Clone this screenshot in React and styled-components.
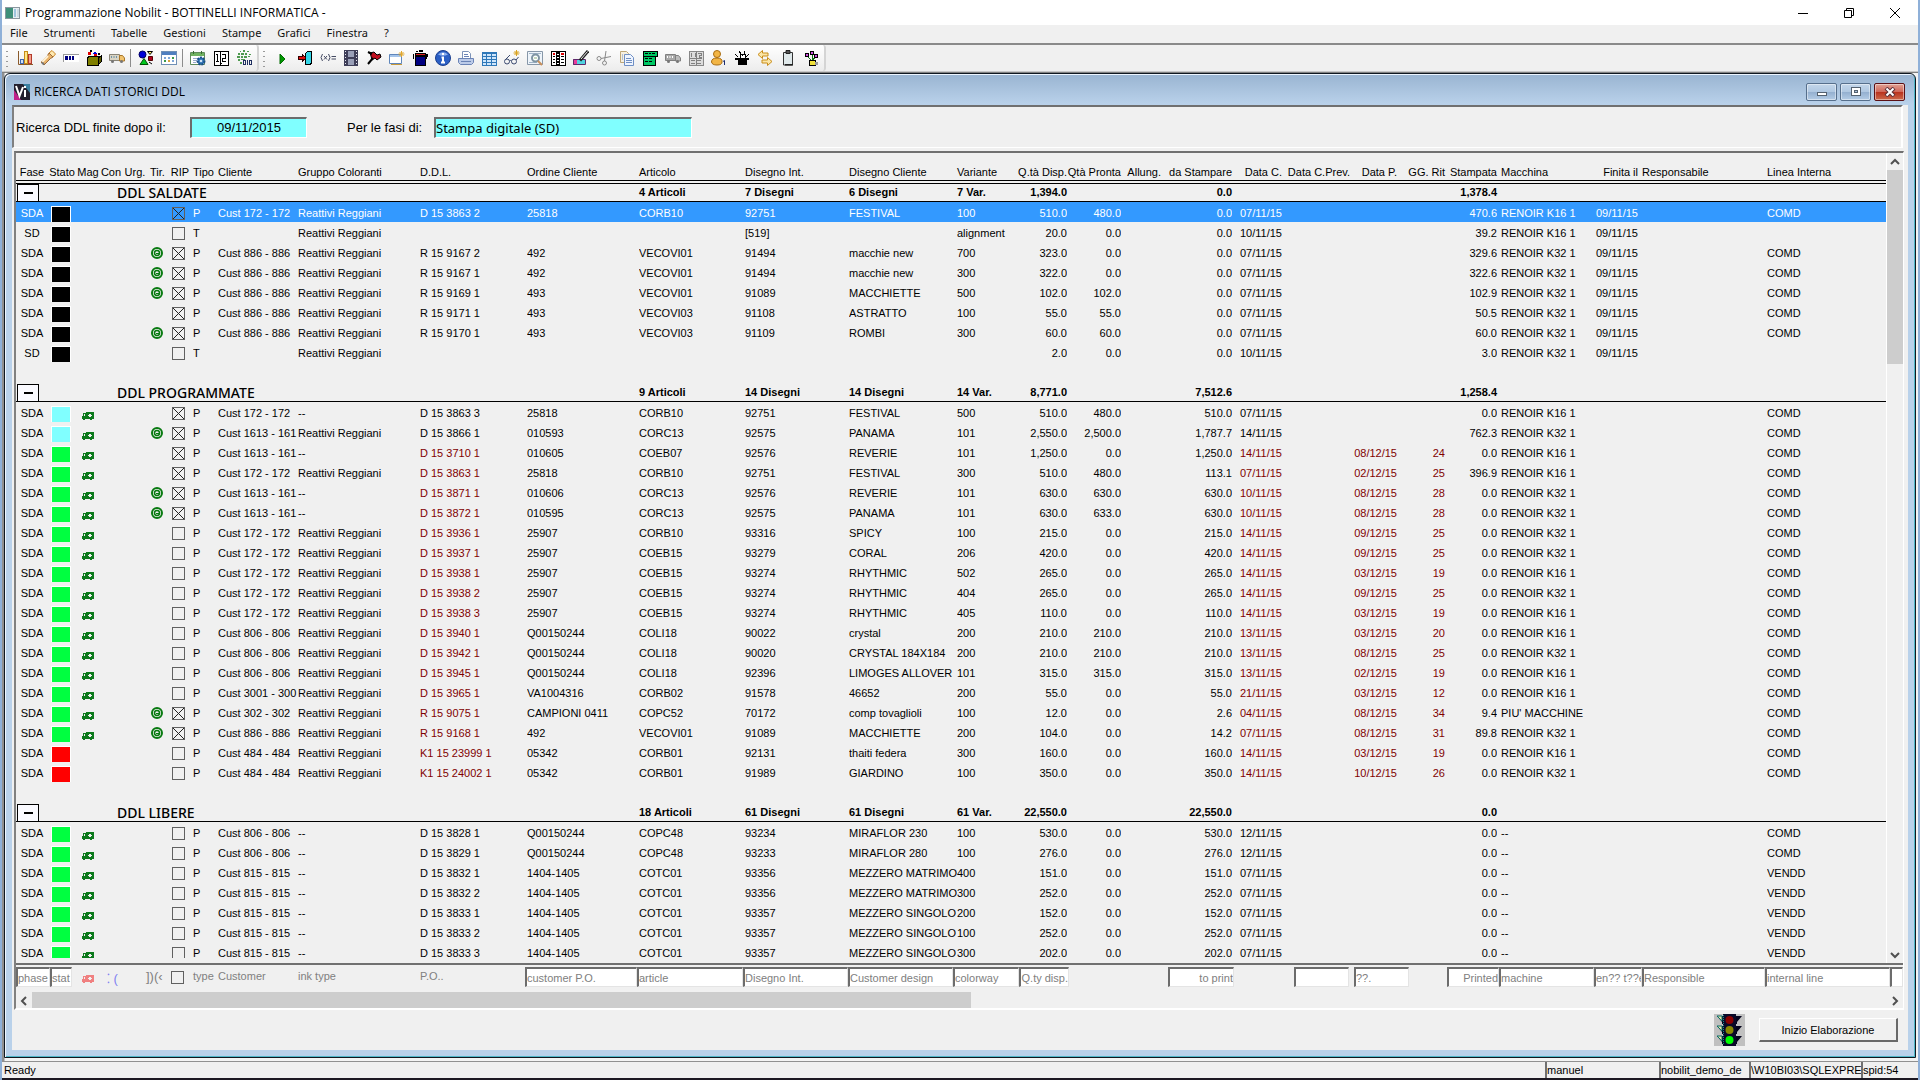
import React from 'react';
import styled, { createGlobalStyle, css } from 'styled-components';

const GlobalStyle = createGlobalStyle`
  * {
    box-sizing: border-box;
  }
  body {
    margin: 0;
    background: #f0f0f0;
    font-family: "Liberation Sans", Arial, sans-serif;
    font-size: 11px;
    color: #000;
  }
  button, input {
    font: inherit;
    color: inherit;
    border-radius: 0;
    margin: 0;
  }
`;

/* ---------- toolbar drawings, all on a 16x16 grid ---------- */

const Icon = ({ children, crisp }) => (
  <svg width="16" height="16" viewBox="0 0 16 16" fill="none" shapeRendering={crisp ? 'crispEdges' : 'auto'} aria-hidden="true">
    {children}
  </svg>
);

const ChartIcon = () => (
  <Icon>
    <path d="M1.5 1v13.5H16" stroke="#8a5a2b" />
    <rect x="3.5" y="9.5" width="3" height="4" fill="#cfe0f7" stroke="#3f66ad" />
    <rect x="7.5" y="1.500" width="3" height="12" fill="#ffe58a" stroke="#c58b16" />
    <rect x="11.500" y="4.500" width="3" height="9" fill="#f3a08c" stroke="#b23a2b" />
  </Icon>
);
const TorchIcon = () => (
  <Icon>
    <path d="M9 3l3-2.500 3.500 3.500-2.500 3z" fill="#ffe9b0" stroke="#c8862a" />
    <path d="M9 3l4 4-2.500 1.500L4 15l-3-3 6.500-6.500z" fill="#e9b36a" stroke="#9b6a3a" />
    <path d="M2 12l6-6" stroke="#fff2d6" strokeWidth="2" />
    <path d="M2 12.500l2 2" stroke="#777" strokeWidth="2" />
  </Icon>
);
const ProgressIcon = () => (
  <Icon crisp>
    <rect x="0" y="5" width="16" height="7" fill="#fff" />
    <path d="M0 4.500h16M.5 5v7" stroke="#9a9a9a" />
    <path d="M2 6h3v4H2zM6 6h2v4H6zM9 6h2v4H9z" fill="#000080" />
  </Icon>
);
const BoxIcon = () => (
  <Icon crisp>
    <path d="M1 8l3-2h11l-3 2v7H1z" fill="#808000" stroke="#000" />
    <path d="M12 8l3-2v6l-3 3z" fill="#5b5b00" stroke="#000" />
    <path d="M3 7h8l3-1H5z" fill="#000" />
    <path d="M2 2h3v3H2zM8 4h3v2H8z" fill="#e00000" />
    <path d="M9 1l2 3H7z" fill="#0000e0" />
    <path d="M4 0h2v2H4zM12 3h2v2h-2z" fill="#000" />
  </Icon>
);
const VanIcon = ({ grey }) => (
  <Icon>
    <path d="M.5 4.500h10v6H.5z" fill={grey ? '#a8a8a8' : '#d9d4c4'} stroke={grey ? '#808080' : '#8a8577'} />
    <path d="M10.500 5.500h3l2 2.500v3h-5z" fill={grey ? '#bcbcbc' : '#f1c36d'} stroke={grey ? '#808080' : '#a9772a'} />
    <path d="M2 7h1M4.500 7h1M7 7h1" stroke={grey ? '#fff' : '#6f93a8'} strokeWidth="2" />
    <circle cx="3.500" cy="11.500" r="1.500" fill="#777" />
    <circle cx="12.500" cy="11.500" r="1.500" fill="#777" />
  </Icon>
);
const ShapesIcon = () => (
  <Icon>
    <circle cx="4.500" cy="4.500" r="3.500" fill="#0000d8" stroke="#000060" />
    <path d="M9.500 1.500h5l-2.500 3z" fill="#fff36b" stroke="#000" />
    <path d="M10.500 6.500h4v4h-4z" fill="#b00020" stroke="#500" />
    <path d="M6 8.500l4 6H2z" fill="#00c81e" stroke="#004d00" />
    <path d="M11 12l3 2" stroke="#000" />
  </Icon>
);
const CalendarGridIcon = () => (
  <Icon crisp>
    <rect x=".5" y="1.500" width="15" height="13" fill="#fff" stroke="#6f8fb5" />
    <path d="M1 2h14v3H1z" fill="#4f7fc0" />
    <path d="M3 7h2v2H3zM7 7h2v2H7zM11 10h2v2h-2z" fill="#7fa6d8" />
    <path d="M11 7h2v2h-2zM3 10h2v2H3z" fill="#3a9a4a" />
    <path d="M7 10h2v2H7z" fill="#d8a23a" />
  </Icon>
);
const CalendarGearIcon = () => (
  <Icon>
    <path d="M.5 2.500h14v12H.5z" fill="#fff" stroke="#5f8a5a" />
    <path d="M1 3h13v3H1z" fill="#6fb25f" />
    <path d="M3.500 1v3M11.500 1v3" stroke="#3b6b34" />
    <path d="M3 8.500h5M3 10.500h4M3 12.500h3" stroke="#9ac" />
    <circle cx="11" cy="11" r="3.500" fill="#2f74b5" stroke="#1b4f86" strokeDasharray="2 1" strokeWidth="2" />
    <circle cx="11" cy="11" r="1.300" fill="#cfe3f6" />
  </Icon>
);
const OneTwoIcon = ({ grey }) => (
  <Icon crisp>
    {grey ? (
      <>
        <path d="M1 1h14v14H1z" fill="#dcdcdc" stroke="#888" />
        <path d="M3.500 3v4M7.500 3v4M10 3.500h3v2h-2v2h3M8 1v14M2 8.500h12M3 10.500h4M9 10.500h4M3 13h4M9 13h4" stroke="#808080" />
      </>
    ) : (
      <>
        <path d="M1 1h14v14H1z" fill="#fff" stroke="#000" />
        <path d="M7.500 1v14M4.500 4v7M3 4.500h1M3 11.500h3M9 4.500h3v3.500H9.500v3.500H13M8 13h1" stroke="#000" />
      </>
    )}
  </Icon>
);
const BinaryIcon = () => (
  <Icon crisp>
    <path d="M4 1h1v1H4zM7 0h2v2H7zM11 1h2v1h-2zM2 3h2v2H2zM5 3h3v2H5zM9 3h2v2H9zM13 4h2v1h-2zM1 6h3v2H1zM5 6h2v2H5zM8 6h3v2H8zM12 6h2v1h-2zM2 9h2v2H2zM5 9h4v1H5zM4 12h2v2H4z" fill="#4f9a50" />
    <path d="M7.500 10.500h2v4h-2zM11.500 10v5M13.500 10.500h2v4h-2z" stroke="#1d2d5f" />
  </Icon>
);
const PlayIcon = () => (
  <Icon>
    <path d="M6 4l5 5-5 5z" fill="#009900" stroke="#006a00" />
  </Icon>
);
const ExitIcon = () => (
  <Icon crisp>
    <path d="M8.500 3.500l2-2h4v12l-2 1h-4z" fill="#35d6e8" stroke="#000" />
    <path d="M1 6.500h4v-2l4 3.500-4 3.500v-2H1z" fill="#e01010" stroke="#300" />
  </Icon>
);
const VarIcon = () => (
  <Icon>
    <path d="M2.500 4Q-.5 7.500 2.500 11M4 6l3 3.500M7 6L4 9.500M8.500 4q3 3.500 0 7M11.500 6.500H16M11.500 9H16" stroke="#454b63" />
  </Icon>
);
const FilmIcon = () => (
  <Icon crisp>
    <path d="M1 0h14v16H1z" fill="#3e3e58" />
    <path d="M5 1h6v6H5zM5 9h6v6H5z" fill="#9aa0b8" />
    <path d="M2.500 1v15M13.500 1v15" stroke="#e8e8f0" strokeDasharray="1 2" />
  </Icon>
);
const PinIcon = () => (
  <Icon>
    <path d="M4 3l4-1 3 3 3-1 1 3-4 3-2-2-3 2-1-4z" fill="#c01020" stroke="#000" />
    <path d="M7 8l-5 6" stroke="#000" strokeWidth="2" />
    <path d="M2 2l4 2" stroke="#000" strokeWidth="2" />
  </Icon>
);
const NewWindowIcon = () => (
  <Icon>
    <path d="M.5 4.500h12v9H.5z" fill="#fff" stroke="#5f86bb" />
    <path d="M1 5h11v2H1z" fill="#a5c4ea" />
    <path d="M12.500 1v6M9.500 4h6M10.500 2l4 4M14.500 2l-4 4" stroke="#e2a82e" />
    <path d="M2 14.500h11" stroke="#c89a3a" />
  </Icon>
);
const PotIcon = () => (
  <Icon crisp>
    <path d="M3 6h10v9H3z" fill="#000080" stroke="#000" />
    <path d="M3 3h10v2H3z" fill="#e02020" stroke="#000" />
    <path d="M4 1h2v1H4zM7 0h4v2H7zM1 4h1v5H1zM14 4h2v3h-1v2h-1z" fill="#000" />
  </Icon>
);
const InfoIcon = () => (
  <Icon>
    <circle cx="8" cy="8" r="7.500" fill="#2b5fc4" stroke="#1b3f8f" />
    <path d="M3 4.500Q8 0 13 4.500 8 7 3 4.500z" fill="#8fb2ee" />
    <path d="M8 3v2M6.500 7.500H8V12M6 12.500h4" stroke="#fff" strokeWidth="2" />
  </Icon>
);
const PrinterIcon = () => (
  <Icon>
    <path d="M4.500 1.500h6l2 2v5h-8z" fill="#fff" stroke="#7d93b8" />
    <path d="M.5 8.500h15v4l-2 2h-11l-2-2z" fill="#bccbe8" stroke="#6a83b5" />
    <path d="M6 4.500h4M6 6.500h5M3 11.500h10" stroke="#6a83b5" />
  </Icon>
);
const TableIcon = () => (
  <Icon crisp>
    <path d="M1 2h14v13H1z" fill="#cfe6fb" stroke="#2f78b8" />
    <path d="M1 2h14v2H1z" fill="#2f78b8" />
    <path d="M1 6.500h14M1 9.500h14M1 12.500h14M5.500 2v13M10.500 2v13" stroke="#2f78b8" />
  </Icon>
);
const GlassesIcon = () => (
  <Icon>
    <circle cx="3" cy="11.500" r="2.500" stroke="#3b4a70" />
    <circle cx="10" cy="11.500" r="2.500" stroke="#3b4a70" />
    <path d="M5.500 11q1-1 2 0M1.500 9.500L6 5M12 10l2.500-3" stroke="#3b4a70" />
    <path d="M12.500 0v6M9.500 3h6M10.500 1l4 4M14.500 1l-4 4" stroke="#d9a320" />
  </Icon>
);
const SearchTableIcon = () => (
  <Icon>
    <path d="M.5 1.500h15v13H.5z" fill="#eef4fa" stroke="#8797a8" />
    <path d="M2 3.500h12M2 12.500h8" stroke="#9fb3c7" />
    <circle cx="8.500" cy="8" r="3.500" fill="#fff" stroke="#7f95a3" strokeWidth="2" />
    <path d="M7 8h3" stroke="#88b07c" />
    <path d="M11 11l4 4" stroke="#c98f5a" strokeWidth="2" />
  </Icon>
);
const AlphaTableIcon = () => (
  <Icon crisp>
    <path d="M1 1h14v14H1z" fill="#fff" stroke="#000" />
    <path d="M6 1h4v14H6z" fill="#000" />
    <path d="M3 3.500h2M11 3.500h3" stroke="#e00000" strokeWidth="2" />
    <path d="M3 6.500h2M3 9.500h2M3 12.500h2M11 6.500h3M11 9.500h3M11 12.500h3" stroke="#000" />
    <path d="M7 4h2M7 7h2M7 10h2M7 13h2" stroke="#fff" />
  </Icon>
);
const PenIcon = () => (
  <Icon>
    <path d="M0 9h7l-2 6H0z" fill="#e83a9a" />
    <path d="M4 9h8v6H4z" fill="#4fd2e0" />
    <path d="M.5 9.500h12v5H.5z" stroke="#5a2a6a" />
    <path d="M15 1L7 10.500" stroke="#222" strokeWidth="3" />
    <path d="M14.500 1.500L8 9" stroke="#e8e8e8" />
  </Icon>
);
const ScissorsIcon = () => (
  <Icon>
    <circle cx="3" cy="8.500" r="2" stroke="#8a8a8a" />
    <circle cx="8.500" cy="13" r="2" stroke="#8a8a8a" />
    <path d="M5 8.500l10-2M8.500 11L10 1" stroke="#8a8a8a" />
  </Icon>
);
const CopyIcon = () => (
  <Icon>
    <path d="M1.500 1.500h6l2 2v9h-8z" fill="#f6efe0" stroke="#bda678" />
    <path d="M5.500 4.500h6l3 3v8h-9z" fill="#eef4ff" stroke="#6f8fc4" />
    <path d="M7 8.500h5M7 10.500h6M7 12.500h6M3 5h1M3 7h1M3 9h1" stroke="#6f8fc4" />
  </Icon>
);
const GreenTerminalIcon = () => (
  <Icon crisp>
    <path d="M1 1h14v5h-2v9H1z" fill="#00c864" stroke="#000" />
    <path d="M3 3.500h3M7 3.500h2M10 3.500h3M3 8.500h3M7 8.500h3M3 11.500h3M7 11.500h3M1 6h13" stroke="#000" />
  </Icon>
);
const UserIcon = () => (
  <Icon>
    <circle cx="6" cy="4" r="3.500" fill="#f2b545" stroke="#a86c12" />
    <path d="M.5 12q0-4 5.500-4t5 4q0 3-5 3t-5.500-3z" fill="#f2b545" stroke="#a86c12" />
    <path d="M12 11.500l1.500-1V15" stroke="#1d2d6f" />
  </Icon>
);
const HatIcon = () => (
  <Icon crisp>
    <path d="M4 9h9v6H4zM1 8h14v2H1z" fill="#000" />
    <path d="M6 4h5v4H6z" fill="#fff" stroke="#000" />
    <path d="M5 1l2 3M11 1L10 4M1 4l3 3M15 4l-3 3M8 5h1" stroke="#000" />
  </Icon>
);
const SwapIcon = () => (
  <Icon>
    <path d="M1 4.500L5.500.5v2.500H11v3H5.500v2.500z" fill="#fbe6a8" stroke="#c98d1a" />
    <path d="M15 11.500L10.500 7.500V10H5v3h5.500v2.500z" fill="#fbe6a8" stroke="#c98d1a" />
  </Icon>
);
const ClipboardIcon = () => (
  <Icon>
    <path d="M3.500 2.500h9v12.500h-9z" fill="#dfe8ea" stroke="#333" />
    <path d="M6 .5h4v3H6z" fill="#555" stroke="#222" />
    <path d="M5 14h8v1.500H5z" fill="#222" />
  </Icon>
);
const FlowersIcon = () => (
  <Icon crisp>
    <path d="M6 10h6v5H6z" fill="#f2e23a" stroke="#000" />
    <path d="M12 12h3v3h-3z" fill="#9a9a9a" />
    <path d="M4 6l4 4M9 4v6M13 6l-3 4" stroke="#107010" />
    <path d="M2 3h3v3H2zM7 1h3v3H7zM11 4h3v3h-3z" fill="#d050e0" stroke="#000" />
  </Icon>
);

const TruckMark = ({ color = '#0c7a1c' }) => (
  <svg width="12" height="8" viewBox="0 0 12 8" shapeRendering="crispEdges" aria-hidden="true">
    <rect x="4" y="0" width="8" height="7" fill={color} />
    <rect x="1" y="1" width="3" height="1" fill={color} />
    <rect x="1" y="2" width="1" height="2" fill={color} />
    <rect x="3" y="2" width="1" height="2" fill={color} />
    <rect x="0" y="4" width="4" height="3" fill={color} />
    <rect x="1" y="7" width="2" height="1" fill={color} />
    <rect x="8" y="7" width="2" height="1" fill={color} />
    <rect x="6" y="3" width="4" height="1" fill="#f0f0f0" />
    <rect x="7" y="2" width="2" height="3" fill="#f0f0f0" />
  </svg>
);

const TirMark = () => (
  <svg width="12" height="12" viewBox="0 0 12 12" fill="none" aria-hidden="true">
    <circle cx="6" cy="6" r="5" stroke="#087a10" strokeWidth="2" />
    <circle cx="6" cy="6" r="2.500" stroke="#087a10" strokeWidth="1.500" />
    <path d="M5 6.500h3" stroke="#087a10" />
  </svg>
);

const AppIcon = () => (
  <svg width="15" height="12" viewBox="0 0 15 12" aria-hidden="true">
    <rect x=".5" y=".5" width="14" height="11" fill="#e8eef2" stroke="#8a979f" />
    <rect x="1" y="1" width="7" height="10" fill="#3f8f7a" />
    <rect x="9" y="2" width="2" height="8" fill="#9fc4dd" />
    <rect x="12" y="2" width="2" height="8" fill="#c9dbe6" />
  </svg>
);

const LogoIcon = () => (
  <svg width="16" height="16" viewBox="0 0 16 16" fill="none" aria-hidden="true">
    <rect width="16" height="16" fill="#23202e" />
    <path d="M0 6l7 10H0z" fill="#c0208a" />
    <path d="M9 0h7v9z" fill="#3a7fa0" />
    <path d="M2 2l3.500 10L9 3" stroke="#fff" strokeWidth="2" />
    <path d="M11 6v7M11 2v2" stroke="#fff" strokeWidth="2" />
  </svg>
);

const TrafficLight = () => (
  <svg width="31" height="32" viewBox="0 0 31 32" aria-hidden="true">
    <rect width="31" height="32" fill="#c0c0c0" />
    {[2, 12, 22].map((y) => (
      <path key={y} d={`M3 ${y}h25l-5 6v2H8v-2z`} fill="#05051e" />
    ))}
    {[2, 12, 22].map((y) => (
      <path key={y} d={`M3 ${y}h5v5z`} fill="#e8e8a0" stroke="#0a6a6a" />
    ))}
    <rect x="9" y="0" width="13" height="32" fill="#0a0a28" />
    <path d="M9.500 1v30" stroke="#1a8a8a" strokeDasharray="1 1" />
    <circle cx="15.500" cy="6" r="4" fill="#8a0000" />
    <circle cx="15.500" cy="16" r="4" fill="#8a8a00" />
    <circle cx="15.500" cy="26" r="4" fill="#00ff00" />
  </svg>
);

const Chevron = ({ d }) => (
  <svg width="10" height="10" viewBox="0 0 10 10" fill="none" aria-hidden="true">
    <path d={d} stroke="#505050" strokeWidth="2" />
  </svg>
);

/* ---------- outer window ---------- */

const Frame = styled.div`
  display: flex;
  flex-direction: column;
  height: 100vh;
  overflow: hidden;
  background: #f0f0f0;
  border: solid #8fb0d8;
  border-width: 0 2px;
`;

const TitleBar = styled.header`
  display: flex;
  align-items: center;
  height: 25px;
  flex: none;
  padding-left: 3px;
  background: #fff;
  font: 12px/16px "Open Sans", sans-serif;
`;

const AppTitle = styled.h1`
  flex: 1;
  margin: 0 0 0 5px;
  font: inherit;
`;

const CaptionButton = styled.button`
  display: grid;
  place-items: center;
  width: 46px;
  height: 24px;
  padding: 0;
  border: 0;
  background: none;
`;

const MenuBar = styled.nav`
  display: flex;
  gap: 16px;
  height: 18px;
  flex: none;
  padding-left: 8px;
  font: 11px/15px "Noto Sans", sans-serif;
`;

const MenuLink = styled.a`
  color: #111;
  text-decoration: none;
`;

const ToolStrip = styled.div`
  display: flex;
  flex: none;
  height: 29px;
  border-top: 2px solid #8a8a8a;
  border-bottom: 1px solid #c8c8c8;
`;

const ToolGroup = styled.div`
  display: flex;
  align-items: center;
  padding: 0 2px 0 11px;
  border-right: 2px solid #d4d4d4;
  border-radius: 0 3px 3px 0;
  background:
    radial-gradient(circle, #9a9a9a 1px, transparent 1px) 3px 4px / 4px 5px no-repeat,
    radial-gradient(circle, #9a9a9a 1px, transparent 1px) 3px 9px / 4px 5px no-repeat,
    radial-gradient(circle, #9a9a9a 1px, transparent 1px) 3px 14px / 4px 5px no-repeat,
    radial-gradient(circle, #9a9a9a 1px, transparent 1px) 3px 19px / 4px 5px no-repeat,
    linear-gradient(#fff, #ececec);
`;

const ToolButton = styled.button`
  display: grid;
  place-items: center;
  width: 23px;
  height: 24px;
  padding: 0;
  border: 0;
  background: none;
`;

const ToolDivider = styled.span`
  width: 2px;
  height: 18px;
  margin: 0 2px;
  border-left: 1px solid #8c8c8c;
`;

const Workspace = styled.main`
  display: flex;
  flex: 1;
  min-height: 0;
  padding: 0 2px 3px;
  border-top: 1px solid #808080;
  background: linear-gradient(90deg, #909090 2px, #f4f4f4 3px);
`;

/* ---------- child window ---------- */

const ChildWindow = styled.section`
  display: flex;
  flex-direction: column;
  flex: 1;
  min-width: 0;
  padding: 1px 7px 7px;
  border: 1px solid #101820;
  border-radius: 6px 6px 0 0;
  background: linear-gradient(#99b4d1, #b9d1ea 30px);
  box-shadow: inset 1px 1px 0 #eef6ff, inset -1px -1px 0 #4fb6c8;
`;

const ChildTitle = styled.div`
  display: flex;
  align-items: center;
  flex: none;
  height: 30px;
  padding: 3px 3px 0 2px;
  font: 12px/16px "Open Sans", sans-serif;
`;

const ChildName = styled.h2`
  flex: 1;
  margin: 0 0 0 4px;
  font: inherit;
`;

const GlassButton = styled.button`
  display: grid;
  place-items: center;
  width: 31px;
  height: 18px;
  margin-left: 3px;
  padding: 0;
  border: 1px solid ${(p) => (p.$close ? '#5b1015' : '#566f8c')};
  border-radius: 2px;
  box-shadow: inset 0 0 0 1px rgba(255, 255, 255, 0.45);
  background: ${(p) =>
    p.$close
      ? 'linear-gradient(#e0a294, #d0685a 48%, #b8301c 50%, #cc6a4c)'
      : 'linear-gradient(#c3d6ea, #b0c8e2 48%, #93afcf 50%, #b4cce6)'};
`;

const ChildBody = styled.div`
  display: flex;
  flex-direction: column;
  flex: 1;
  min-height: 0;
  background: #f0f0f0;
`;

const SearchForm = styled.form`
  display: flex;
  align-items: center;
  flex: none;
  height: 43px;
  margin-right: 5px;
  padding-left: 2px;
  border: solid;
  border-width: 2px 2px 1px 2px;
  border-color: #707070 #fff #fff #808080;
  font-size: 13px;
`;

const FormLabel = styled.label`
  width: ${(p) => p.$width}px;
`;

const CyanInput = styled.input`
  width: ${(p) => p.$width}px;
  height: 21px;
  margin-right: ${(p) => p.$after || 0}px;
  padding: 0;
  border: solid;
  border-width: 2px 1px 1px 2px;
  border-color: #6c6c6c #fff #fff #6c6c6c;
  background: #80ffff;
  text-align: ${(p) => p.$align || 'left'};
  font-family: ${(p) => (p.$align ? 'inherit' : '"Noto Sans", sans-serif')};
  font-size: 13px;
`;

/* ---------- grid ---------- */

const GridPanel = styled.div`
  display: flex;
  flex-direction: column;
  flex: 1;
  min-height: 0;
  margin: 3px 4px 0 2px;
  border: solid;
  border-width: 2px 1px 2px 2px;
  border-color: #707070 #fff #fff #808080;
`;

const GridBody = styled.div`
  display: flex;
  flex: 1;
  min-height: 0;
`;

const TableClip = styled.div`
  flex: 1;
  min-width: 0;
  margin-bottom: 5px;
  overflow: hidden;
`;

const Table = styled.table`
  width: 100%;
  table-layout: fixed;
  border-collapse: separate;
  border-spacing: 0;
`;

const HeadCell = styled.th`
  height: 31px;
  padding: 0 0 0 ${(p) => (p.$indent ? 4 : 0)}px;
  border-bottom: 4px double #000;
  font-weight: normal;
  line-height: 16px;
  vertical-align: bottom;
  white-space: nowrap;
  text-align: ${(p) => p.$align || 'left'};
`;

const Cell = styled.td`
  height: 20px;
  padding: 2px 0 0 ${(p) => (p.$indent ? 4 : 0)}px;
  line-height: 18px;
  white-space: nowrap;
  overflow: hidden;
  text-align: ${(p) => p.$align || 'left'};
  color: ${(p) => (p.$late ? '#800000' : 'inherit')};
`;

const MarkCell = styled.td`
  height: 20px;
  padding: 0 0 ${(p) => p.$bottom || 0}px ${(p) => p.$left}px;
  vertical-align: bottom;
  & > * {
    display: block;
  }
`;

const Row = styled.tr`
  ${(p) =>
    p.$selected &&
    css`
      background: #3399ff;
      color: #fff;
    `}
`;

const SpacerCell = styled.td`
  height: 22px;
  padding: 0;
`;

const GroupCell = styled.td`
  height: 18px;
  padding: 0;
  border-bottom: 1px solid #000;
  font-weight: bold;
  line-height: 17px;
  white-space: nowrap;
  text-align: ${(p) => p.$align || 'left'};
`;

const GroupName = styled.div`
  display: flex;
  gap: 78px;
  padding-left: 1px;
  font-weight: 500;
  font-size: 14px;
  font-family: "Noto Sans", sans-serif;
`;

const Toggle = styled.button`
  display: grid;
  place-items: center;
  width: 22px;
  height: 17px;
  padding: 0;
  border: 1px solid #000;
  border-bottom: 0;
  background: #fafaff;
  &::before {
    content: '';
    width: 9px;
    height: 2px;
    background: #000;
  }
`;

const Swatch = styled.span`
  width: 20px;
  height: 16px;
  border: 1px solid #fff;
  border-bottom: 0;
  background: ${(p) => p.$color};
`;

const Check = styled.input`
  appearance: none;
  width: 13px;
  height: 13px;
  border: 1px solid #606060;
  &:checked {
    background:
      linear-gradient(45deg, transparent 46%, #222 47%, #222 53%, transparent 54%),
      linear-gradient(-45deg, transparent 46%, #222 47%, #222 53%, transparent 54%);
  }
`;

const VScroll = styled.div`
  display: flex;
  flex-direction: column;
  width: 17px;
  border-left: 1px solid #fff;
`;

const ScrollButton = styled.button`
  display: grid;
  place-items: center;
  flex: none;
  width: 16px;
  height: 17px;
  padding: 0;
  border: 0;
  background: none;
`;

const Track = styled.div`
  display: flex;
  flex: 1;
  flex-direction: ${(p) => (p.$vertical ? 'column' : 'row')};
`;

const Thumb = styled.div`
  flex: 0 0 ${(p) => p.$size}%;
  background: #cdcdcd;
`;

const FilterRow = styled.div`
  display: flex;
  flex: none;
  height: 29px;
  padding-top: 2px;
  border-top: 2px solid #707070;
  color: #808080;
  overflow: hidden;
`;

const FilterInput = styled.input`
  flex: ${(p) => (p.$grow ? '1 1 0' : `0 0 ${p.$width}px`)};
  min-width: 0;
  width: ${(p) => p.$width || 0}px;
  height: 20px;
  padding: 0;
  border: solid;
  border-width: 2px 1px 1px 2px;
  border-color: #6c6c6c #e4e4e4 #e4e4e4 #6c6c6c;
  background: #fff;
  text-align: ${(p) => p.$align || 'left'};
`;

const FilterText = styled.span`
  flex: 0 0 ${(p) => p.$width}px;
  height: 20px;
  line-height: 18px;
  white-space: nowrap;
  color: ${(p) => p.$color || 'inherit'};
`;

const FilterMark = styled(FilterText)`
  display: flex;
  align-items: center;
  padding: ${(p) => p.$top || 0}px 0 0 ${(p) => p.$left}px;
  font-size: 13px;
`;

const HScroll = styled.div`
  display: flex;
  flex: none;
  height: 16px;
`;

const Footer = styled.div`
  display: flex;
  align-items: center;
  justify-content: flex-end;
  flex: none;
  gap: 14px;
  height: 40px;
  padding-right: 10px;
`;

const RunButton = styled.button`
  width: 139px;
  height: 24px;
  padding: 0;
  border: solid;
  border-width: 1px 2px 2px 1px;
  border-color: #fff #696969 #696969 #fff;
  background: #f0f0f0;
`;

const StatusBar = styled.footer`
  display: flex;
  flex: none;
  height: 17px;
  border-top: 1px solid #909090;
  line-height: 16px;
`;

const StatusCell = styled.div`
  flex: ${(p) => (p.$width ? `0 0 ${p.$width}px` : '1')};
  padding-left: ${(p) => (p.$width ? 0 : 2)}px;
  border-left: ${(p) => (p.$width ? 2 : 0)}px solid #707070;
  white-space: nowrap;
  overflow: hidden;
`;

const BottomEdge = styled.div`
  flex: none;
  height: 2px;
  background: #1c1822;
`;

/* ---------- data ---------- */

const MENU = ['File', 'Strumenti', 'Tabelle', 'Gestioni', 'Stampe', 'Grafici', 'Finestra', '?'];

const TOOLS_LEFT = [
  ['Statistiche', ChartIcon], ['Cerca', TorchIcon], ['Avanzamento', ProgressIcon], ['Magazzino', BoxIcon], ['Spedizioni', VanIcon],
  null,
  ['Disegni', ShapesIcon], ['Calendario', CalendarGridIcon],
  null,
  ['Pianificazione', CalendarGearIcon], ['Numerazione', OneTwoIcon], ['Dati', BinaryIcon],
];

const TOOLS_RIGHT = [
  ['Avvia', PlayIcon], ['Esci', ExitIcon], ['Variabili', VarIcon], ['Filmato', FilmIcon], ['Fissa', PinIcon],
  ['Nuova finestra', NewWindowIcon], ['Ricette', PotIcon], ['Informazioni', InfoIcon], ['Stampa', PrinterIcon],
  ['Griglia', TableIcon], ['Visualizza', GlassesIcon], ['Anteprima', SearchTableIcon], ['Elenco', AlphaTableIcon],
  ['Modifica', PenIcon], ['Taglia', ScissorsIcon], ['Copia', CopyIcon], ['Terminale', GreenTerminalIcon],
  ['Consegne', () => <VanIcon grey />], ['Sequenza', () => <OneTwoIcon grey />], ['Utente', UserIcon],
  ['Procedure', HatIcon], ['Scambia', SwapIcon], ['Incolla', ClipboardIcon], ['Colori', FlowersIcon],
];

const COLUMNS = [
  { name: 'Fase', width: 32, align: 'center' },
  { name: 'Stato', width: 28, align: 'center' },
  { name: 'Mag', width: 24, align: 'center' },
  { name: 'Con', width: 22, align: 'center' },
  { name: 'Urg.', width: 26, align: 'center' },
  { name: 'Tir.', width: 19, align: 'center' },
  { name: 'RIP', width: 26, align: 'center' },
  { name: 'Tipo', width: 25 },
  { name: 'Cliente', width: 80 },
  { name: 'Gruppo Coloranti', width: 122 },
  { name: 'D.D.L.', width: 107 },
  { name: 'Ordine Cliente', width: 112 },
  { name: 'Articolo', width: 106 },
  { name: 'Disegno Int.', width: 104 },
  { name: 'Disegno Cliente', width: 108 },
  { name: 'Variante', width: 52 },
  { name: 'Q.tà Disp.', width: 58, align: 'right' },
  { name: 'Qtà Pronta', width: 54, align: 'right' },
  { name: 'Allung.', width: 40, align: 'right' },
  { name: 'da Stampare', width: 71, align: 'right' },
  { name: 'Data C.', width: 50, align: 'right' },
  { name: 'Data C.Prev.', width: 68, align: 'right' },
  { name: 'Data P.', width: 47, align: 'right' },
  { name: 'GG. Rit', width: 48, align: 'right' },
  { name: 'Stampata', width: 52, align: 'right' },
  { name: 'Macchina', width: 97, indent: true },
  { name: 'Finita il', width: 44, align: 'right' },
  { name: 'Responsabile', width: 129, indent: true },
  { name: 'Linea Interna' },
];

const BLACK = '#000';
const CYAN = '#80ffff';
const GREEN = '#00ff40';
const RED = '#ff0000';
const RR = 'Reattivi Reggiani';
const K16 = 'RENOIR K16 1';
const K32 = 'RENOIR K32 1';

// fase, colour, marks (m = truck, t = target, x = rip), tipo, cliente, gruppo, ddl, ordine, articolo,
// disegno, disegno cliente, variante, disp, pronta, da stampare, data c, data p, gg, stampata, macchina, finita, linea
const GROUPS = [
  {
    name: 'DDL SALDATE',
    totals: ['4 Articoli', '7 Disegni', '6 Disegni', '7 Var.', '1,394.0', '0.0', '1,378.4'],
    rows: [
      ['SDA', BLACK, 'x', 'P', 'Cust 172 - 172', RR, 'D 15 3863 2', '25818', 'CORB10', '92751', 'FESTIVAL', '100', '510.0', '480.0', '0.0', '07/11/15', '', '', '470.6', K16, '09/11/15', 'COMD'],
      ['SD', BLACK, '', 'T', '', RR, '', '', '', '[519]', '', 'alignment', '20.0', '0.0', '0.0', '10/11/15', '', '', '39.2', K16, '09/11/15', ''],
      ['SDA', BLACK, 'tx', 'P', 'Cust 886 - 886', RR, 'R 15 9167 2', '492', 'VECOVI01', '91494', 'macchie new', '700', '323.0', '0.0', '0.0', '07/11/15', '', '', '329.6', K32, '09/11/15', 'COMD'],
      ['SDA', BLACK, 'tx', 'P', 'Cust 886 - 886', RR, 'R 15 9167 1', '492', 'VECOVI01', '91494', 'macchie new', '300', '322.0', '0.0', '0.0', '07/11/15', '', '', '322.6', K32, '09/11/15', 'COMD'],
      ['SDA', BLACK, 'tx', 'P', 'Cust 886 - 886', RR, 'R 15 9169 1', '493', 'VECOVI01', '91089', 'MACCHIETTE', '500', '102.0', '102.0', '0.0', '07/11/15', '', '', '102.9', K32, '09/11/15', 'COMD'],
      ['SDA', BLACK, 'x', 'P', 'Cust 886 - 886', RR, 'R 15 9171 1', '493', 'VECOVI03', '91108', 'ASTRATTO', '100', '55.0', '55.0', '0.0', '07/11/15', '', '', '50.5', K32, '09/11/15', 'COMD'],
      ['SDA', BLACK, 'tx', 'P', 'Cust 886 - 886', RR, 'R 15 9170 1', '493', 'VECOVI03', '91109', 'ROMBI', '300', '60.0', '60.0', '0.0', '07/11/15', '', '', '60.0', K32, '09/11/15', 'COMD'],
      ['SD', BLACK, '', 'T', '', RR, '', '', '', '', '', '', '2.0', '0.0', '0.0', '10/11/15', '', '', '3.0', K32, '09/11/15', ''],
    ],
  },
  {
    name: 'DDL PROGRAMMATE',
    totals: ['9 Articoli', '14 Disegni', '14 Disegni', '14 Var.', '8,771.0', '7,512.6', '1,258.4'],
    rows: [
      ['SDA', CYAN, 'mx', 'P', 'Cust 172 - 172', '--', 'D 15 3863 3', '25818', 'CORB10', '92751', 'FESTIVAL', '500', '510.0', '480.0', '510.0', '07/11/15', '', '', '0.0', K16, '', 'COMD'],
      ['SDA', CYAN, 'mtx', 'P', 'Cust 1613 - 161', RR, 'D 15 3866 1', '010593', 'CORC13', '92575', 'PANAMA', '101', '2,550.0', '2,500.0', '1,787.7', '14/11/15', '', '', '762.3', K32, '', 'COMD'],
      ['SDA', GREEN, 'mx', 'P', 'Cust 1613 - 161', '--', 'D 15 3710 1', '010605', 'COEB07', '92576', 'REVERIE', '101', '1,250.0', '0.0', '1,250.0', '14/11/15', '08/12/15', '24', '0.0', K16, '', 'COMD'],
      ['SDA', GREEN, 'mx', 'P', 'Cust 172 - 172', RR, 'D 15 3863 1', '25818', 'CORB10', '92751', 'FESTIVAL', '300', '510.0', '480.0', '113.1', '07/11/15', '02/12/15', '25', '396.9', K16, '', 'COMD'],
      ['SDA', GREEN, 'mtx', 'P', 'Cust 1613 - 161', '--', 'D 15 3871 1', '010606', 'CORC13', '92576', 'REVERIE', '101', '630.0', '630.0', '630.0', '10/11/15', '08/12/15', '28', '0.0', K32, '', 'COMD'],
      ['SDA', GREEN, 'mtx', 'P', 'Cust 1613 - 161', '--', 'D 15 3872 1', '010595', 'CORC13', '92575', 'PANAMA', '101', '630.0', '633.0', '630.0', '10/11/15', '08/12/15', '28', '0.0', K32, '', 'COMD'],
      ['SDA', GREEN, 'm', 'P', 'Cust 172 - 172', RR, 'D 15 3936 1', '25907', 'CORB10', '93316', 'SPICY', '100', '215.0', '0.0', '215.0', '14/11/15', '09/12/15', '25', '0.0', K32, '', 'COMD'],
      ['SDA', GREEN, 'm', 'P', 'Cust 172 - 172', RR, 'D 15 3937 1', '25907', 'COEB15', '93279', 'CORAL', '206', '420.0', '0.0', '420.0', '14/11/15', '09/12/15', '25', '0.0', K32, '', 'COMD'],
      ['SDA', GREEN, 'm', 'P', 'Cust 172 - 172', RR, 'D 15 3938 1', '25907', 'COEB15', '93274', 'RHYTHMIC', '502', '265.0', '0.0', '265.0', '14/11/15', '03/12/15', '19', '0.0', K16, '', 'COMD'],
      ['SDA', GREEN, 'm', 'P', 'Cust 172 - 172', RR, 'D 15 3938 2', '25907', 'COEB15', '93274', 'RHYTHMIC', '404', '265.0', '0.0', '265.0', '14/11/15', '09/12/15', '25', '0.0', K32, '', 'COMD'],
      ['SDA', GREEN, 'm', 'P', 'Cust 172 - 172', RR, 'D 15 3938 3', '25907', 'COEB15', '93274', 'RHYTHMIC', '405', '110.0', '0.0', '110.0', '14/11/15', '03/12/15', '19', '0.0', K16, '', 'COMD'],
      ['SDA', GREEN, 'm', 'P', 'Cust 806 - 806', RR, 'D 15 3940 1', 'Q00150244', 'COLI18', '90022', 'crystal', '200', '210.0', '210.0', '210.0', '13/11/15', '03/12/15', '20', '0.0', K16, '', 'COMD'],
      ['SDA', GREEN, 'm', 'P', 'Cust 806 - 806', RR, 'D 15 3942 1', 'Q00150244', 'COLI18', '90020', 'CRYSTAL 184X184', '200', '210.0', '210.0', '210.0', '13/11/15', '08/12/15', '25', '0.0', K32, '', 'COMD'],
      ['SDA', GREEN, 'm', 'P', 'Cust 806 - 806', RR, 'D 15 3945 1', 'Q00150244', 'COLI18', '92396', 'LIMOGES ALLOVER', '101', '315.0', '315.0', '315.0', '13/11/15', '02/12/15', '19', '0.0', K16, '', 'COMD'],
      ['SDA', GREEN, 'm', 'P', 'Cust 3001 - 300', RR, 'D 15 3965 1', 'VA1004316', 'CORB02', '91578', '46652', '200', '55.0', '0.0', '55.0', '21/11/15', '03/12/15', '12', '0.0', K16, '', 'COMD'],
      ['SDA', GREEN, 'mtx', 'P', 'Cust 302 - 302', RR, 'R 15 9075 1', 'CAMPIONI 0411', 'COPC52', '70172', 'comp tovaglioli', '100', '12.0', '0.0', '2.6', '04/11/15', '08/12/15', '34', '9.4', "PIU' MACCHINE", '', 'COMD'],
      ['SDA', GREEN, 'mtx', 'P', 'Cust 886 - 886', RR, 'R 15 9168 1', '492', 'VECOVI01', '91089', 'MACCHIETTE', '200', '104.0', '0.0', '14.2', '07/11/15', '08/12/15', '31', '89.8', K32, '', 'COMD'],
      ['SDA', RED, '', 'P', 'Cust 484 - 484', RR, 'K1 15 23999 1', '05342', 'CORB01', '92131', 'thaiti federa', '300', '160.0', '0.0', '160.0', '14/11/15', '03/12/15', '19', '0.0', K16, '', 'COMD'],
      ['SDA', RED, '', 'P', 'Cust 484 - 484', RR, 'K1 15 24002 1', '05342', 'CORB01', '91989', 'GIARDINO', '100', '350.0', '0.0', '350.0', '14/11/15', '10/12/15', '26', '0.0', K32, '', 'COMD'],
    ],
  },
  {
    name: 'DDL LIBERE',
    totals: ['18 Articoli', '61 Disegni', '61 Disegni', '61 Var.', '22,550.0', '22,550.0', '0.0'],
    rows: [
      ['SDA', GREEN, 'm', 'P', 'Cust 806 - 806', '--', 'D 15 3828 1', 'Q00150244', 'COPC48', '93234', 'MIRAFLOR 230', '100', '530.0', '0.0', '530.0', '12/11/15', '', '', '0.0', '--', '', 'COMD'],
      ['SDA', GREEN, 'm', 'P', 'Cust 806 - 806', '--', 'D 15 3829 1', 'Q00150244', 'COPC48', '93233', 'MIRAFLOR 280', '100', '276.0', '0.0', '276.0', '12/11/15', '', '', '0.0', '--', '', 'COMD'],
      ['SDA', GREEN, 'm', 'P', 'Cust 815 - 815', '--', 'D 15 3832 1', '1404-1405', 'COTC01', '93356', 'MEZZERO MATRIMON', '400', '151.0', '0.0', '151.0', '07/11/15', '', '', '0.0', '--', '', 'VENDD'],
      ['SDA', GREEN, 'm', 'P', 'Cust 815 - 815', '--', 'D 15 3832 2', '1404-1405', 'COTC01', '93356', 'MEZZERO MATRIMON', '300', '252.0', '0.0', '252.0', '07/11/15', '', '', '0.0', '--', '', 'VENDD'],
      ['SDA', GREEN, 'm', 'P', 'Cust 815 - 815', '--', 'D 15 3833 1', '1404-1405', 'COTC01', '93357', 'MEZZERO SINGOLO', '200', '152.0', '0.0', '152.0', '07/11/15', '', '', '0.0', '--', '', 'VENDD'],
      ['SDA', GREEN, 'm', 'P', 'Cust 815 - 815', '--', 'D 15 3833 2', '1404-1405', 'COTC01', '93357', 'MEZZERO SINGOLO', '100', '252.0', '0.0', '252.0', '07/11/15', '', '', '0.0', '--', '', 'VENDD'],
      ['SDA', GREEN, 'm', 'P', 'Cust 815 - 815', '--', 'D 15 3833 3', '1404-1405', 'COTC01', '93357', 'MEZZERO SINGOLO', '300', '202.0', '0.0', '202.0', '07/11/15', '', '', '0.0', '--', '', 'VENDD'],
    ],
  },
];

/* ---------- parts ---------- */

const Tools = ({ items }) => (
  <ToolGroup role="toolbar">
    {items.map((item, i) => {
      if (!item) return <ToolDivider key={i} />;
      const [label, Drawing] = item;
      return (
        <ToolButton key={i} type="button" aria-label={label}>
          <Drawing />
        </ToolButton>
      );
    })}
  </ToolGroup>
);

const DataRow = ({ row, selected }) => {
  const [fase, color, marks, tipo, cliente, gruppo, ddl, ordine, articolo, disegno, disCliente, variante,
    disp, pronta, stampare, dataC, dataP, gg, stampata, macchina, finita, linea] = row;
  const late = dataP !== '';
  return (
    <Row $selected={selected}>
      <Cell $align="center">{fase}</Cell>
      <MarkCell $left={3}><Swatch $color={color} /></MarkCell>
      <MarkCell $left={6} $bottom={2}>{marks.includes('m') && <TruckMark />}</MarkCell>
      <Cell />
      <Cell />
      <MarkCell $left={3} $bottom={3}>{marks.includes('t') && <TirMark />}</MarkCell>
      <MarkCell $left={5} $bottom={2}>
        <Check type="checkbox" defaultChecked={marks.includes('x')} aria-label={`RIP ${ddl}`} />
      </MarkCell>
      <Cell>{tipo}</Cell>
      <Cell>{cliente}</Cell>
      <Cell>{gruppo}</Cell>
      <Cell $late={late}>{ddl}</Cell>
      <Cell>{ordine}</Cell>
      <Cell>{articolo}</Cell>
      <Cell>{disegno}</Cell>
      <Cell>{disCliente}</Cell>
      <Cell>{variante}</Cell>
      <Cell $align="right">{disp}</Cell>
      <Cell $align="right">{pronta}</Cell>
      <Cell />
      <Cell $align="right">{stampare}</Cell>
      <Cell $align="right" $late={late}>{dataC}</Cell>
      <Cell />
      <Cell $align="right" $late={late}>{dataP}</Cell>
      <Cell $align="right" $late={late}>{gg}</Cell>
      <Cell $align="right">{stampata}</Cell>
      <Cell $indent>{macchina}</Cell>
      <Cell $align="right">{finita}</Cell>
      <Cell />
      <Cell>{linea}</Cell>
    </Row>
  );
};

const Group = ({ group, first }) => {
  const [articoli, disegni, disCliente, variante, disp, stampare, stampata] = group.totals;
  return (
    <tbody>
      {!first && <tr><SpacerCell colSpan={COLUMNS.length} /></tr>}
      <tr>
        <GroupCell colSpan={12}>
          <GroupName>
            <Toggle type="button" aria-label={`Comprimi ${group.name}`} />
            {group.name}
          </GroupName>
        </GroupCell>
        <GroupCell>{articoli}</GroupCell>
        <GroupCell>{disegni}</GroupCell>
        <GroupCell>{disCliente}</GroupCell>
        <GroupCell>{variante}</GroupCell>
        <GroupCell $align="right">{disp}</GroupCell>
        <GroupCell colSpan={2} />
        <GroupCell $align="right">{stampare}</GroupCell>
        <GroupCell colSpan={4} />
        <GroupCell $align="right">{stampata}</GroupCell>
        <GroupCell colSpan={4} />
      </tr>
      {group.rows.map((row, i) => (
        <DataRow key={i} row={row} selected={first && i === 0} />
      ))}
    </tbody>
  );
};

const Filters = () => (
  <FilterRow>
    <FilterInput $width={34} defaultValue="phase" aria-label="Fase" />
    <FilterInput $width={22} defaultValue="stat" aria-label="Stato" />
    <FilterMark $width={34} $left={10} $top={4}><TruckMark color="#f08080" /></FilterMark>
    <FilterMark $width={39} $left={1} $top={3} $color="#8080f0">⁚ (</FilterMark>
    <FilterMark $width={26} $left={1}>])(‹</FilterMark>
    <FilterMark $width={22} $left={0}><Check type="checkbox" aria-label="RIP" /></FilterMark>
    <FilterText $width={25}>type</FilterText>
    <FilterText $width={80}>Customer</FilterText>
    <FilterText $width={122}>ink type</FilterText>
    <FilterText $width={105}>P.O..</FilterText>
    <FilterInput $width={112} defaultValue="customer P.O." aria-label="Ordine Cliente" />
    <FilterInput $width={106} defaultValue="article" aria-label="Articolo" />
    <FilterInput $width={105} defaultValue="Disegno Int." aria-label="Disegno Int." />
    <FilterInput $width={105} defaultValue="Customer design" aria-label="Disegno Cliente" />
    <FilterInput $width={66} defaultValue="colorway" aria-label="Variante" />
    <FilterInput $width={50} defaultValue="Q.ty disp." aria-label="Quantità disponibile" $align="right" />
    <FilterText $width={99} />
    <FilterInput $width={66} defaultValue="to print" aria-label="da Stampare" $align="right" />
    <FilterText $width={60} />
    <FilterInput $width={55} defaultValue="" aria-label="Data C.Prev." />
    <FilterText $width={5} />
    <FilterInput $width={55} defaultValue="??." aria-label="Data P." />
    <FilterText $width={38} />
    <FilterInput $width={52} defaultValue="Printed" aria-label="Stampata" $align="right" />
    <FilterInput $width={95} defaultValue="machine" aria-label="Macchina" />
    <FilterInput $width={48} defaultValue="en?? t??e" aria-label="Finita il" />
    <FilterInput $width={123} defaultValue="Responsible" aria-label="Responsabile" />
    <FilterInput $width={125} defaultValue="internal line" aria-label="Linea Interna" />
    <FilterInput $grow defaultValue="" aria-label="Altro" />
  </FilterRow>
);

const App = () => (
  <>
    <GlobalStyle />
    <Frame>
      <TitleBar>
        <AppIcon />
        <AppTitle>Programmazione Nobilit - BOTTINELLI INFORMATICA -</AppTitle>
        <CaptionButton type="button" aria-label="Riduci a icona">
          <svg width="10" height="10" viewBox="0 0 10 10"><path d="M0 5.500h10" stroke="#000" /></svg>
        </CaptionButton>
        <CaptionButton type="button" aria-label="Ripristina">
          <svg width="10" height="10" viewBox="0 0 10 10" fill="none"><path d="M.5 2.500h7v7h-7zM2.500 2V.5h7v7H8" stroke="#000" /></svg>
        </CaptionButton>
        <CaptionButton type="button" aria-label="Chiudi">
          <svg width="10" height="10" viewBox="0 0 10 10"><path d="M0 0l10 10M10 0L0 10" stroke="#000" /></svg>
        </CaptionButton>
      </TitleBar>

      <MenuBar>
        {MENU.map((item) => (
          <MenuLink key={item} href="#">{item}</MenuLink>
        ))}
      </MenuBar>

      <ToolStrip>
        <Tools items={TOOLS_LEFT} />
        <Tools items={TOOLS_RIGHT} />
      </ToolStrip>

      <Workspace>
        <ChildWindow>
          <ChildTitle>
            <LogoIcon />
            <ChildName>RICERCA DATI STORICI DDL</ChildName>
            <GlassButton type="button" aria-label="Riduci">
              <svg width="12" height="10" viewBox="0 0 12 10"><rect x="1.500" y="5.500" width="9" height="3" fill="#fff" stroke="#54616f" /></svg>
            </GlassButton>
            <GlassButton type="button" aria-label="Ingrandisci">
              <svg width="12" height="10" viewBox="0 0 12 10"><rect x="1.500" y=".5" width="9" height="8" fill="#fff" stroke="#54616f" /><rect x="4.500" y="3.500" width="3" height="2" fill="#a8c0dc" stroke="#54616f" /></svg>
            </GlassButton>
            <GlassButton type="button" aria-label="Chiudi finestra" $close>
              <svg width="12" height="10" viewBox="0 0 12 10"><path d="M2 1l8 8M10 1L2 9" stroke="#5a3038" strokeWidth="4" /><path d="M2.500 1.500l7 7M9.500 1.500l-7 7" stroke="#fff" strokeWidth="2" /></svg>
            </GlassButton>
          </ChildTitle>

          <ChildBody>
            <SearchForm>
              <FormLabel htmlFor="dopo" $width={174}>Ricerca DDL finite dopo il:</FormLabel>
              <CyanInput id="dopo" $width={117} $after={40} $align="center" defaultValue="09/11/2015" />
              <FormLabel htmlFor="fasi" $width={87}>Per le fasi di:</FormLabel>
              <CyanInput id="fasi" $width={258} defaultValue="Stampa digitale (SD)" />
            </SearchForm>

            <GridPanel>
              <GridBody>
                <TableClip>
                  <Table>
                    <colgroup>
                      {COLUMNS.map((col) => (
                        <col key={col.name} width={col.width} />
                      ))}
                    </colgroup>
                    <thead>
                      <tr>
                        {COLUMNS.map((col) => (
                          <HeadCell key={col.name} $align={col.align} $indent={col.indent}>{col.name}</HeadCell>
                        ))}
                      </tr>
                    </thead>
                    {GROUPS.map((group, i) => (
                      <Group key={group.name} group={group} first={i === 0} />
                    ))}
                  </Table>
                </TableClip>
                <VScroll>
                  <ScrollButton type="button" aria-label="Su"><Chevron d="M1 7l4-4 4 4" /></ScrollButton>
                  <Track $vertical><Thumb $size={25} /></Track>
                  <ScrollButton type="button" aria-label="Giù"><Chevron d="M1 3l4 4 4-4" /></ScrollButton>
                </VScroll>
              </GridBody>
              <Filters />
              <HScroll>
                <ScrollButton type="button" aria-label="Sinistra"><Chevron d="M7 1L3 5l4 4" /></ScrollButton>
                <Track><Thumb $size={50.6} /></Track>
                <ScrollButton type="button" aria-label="Destra"><Chevron d="M3 1l4 4-4 4" /></ScrollButton>
              </HScroll>
            </GridPanel>

            <Footer>
              <TrafficLight />
              <RunButton type="button">Inizio Elaborazione</RunButton>
            </Footer>
          </ChildBody>
        </ChildWindow>
      </Workspace>

      <StatusBar>
        <StatusCell>Ready</StatusCell>
        <StatusCell $width={114}>manuel</StatusCell>
        <StatusCell $width={90}>nobilit_demo_de</StatusCell>
        <StatusCell $width={112}>\W10BI03\SQLEXPRES</StatusCell>
        <StatusCell $width={57}>spid:54</StatusCell>
      </StatusBar>
      <BottomEdge />
    </Frame>
  </>
);

export default App;
